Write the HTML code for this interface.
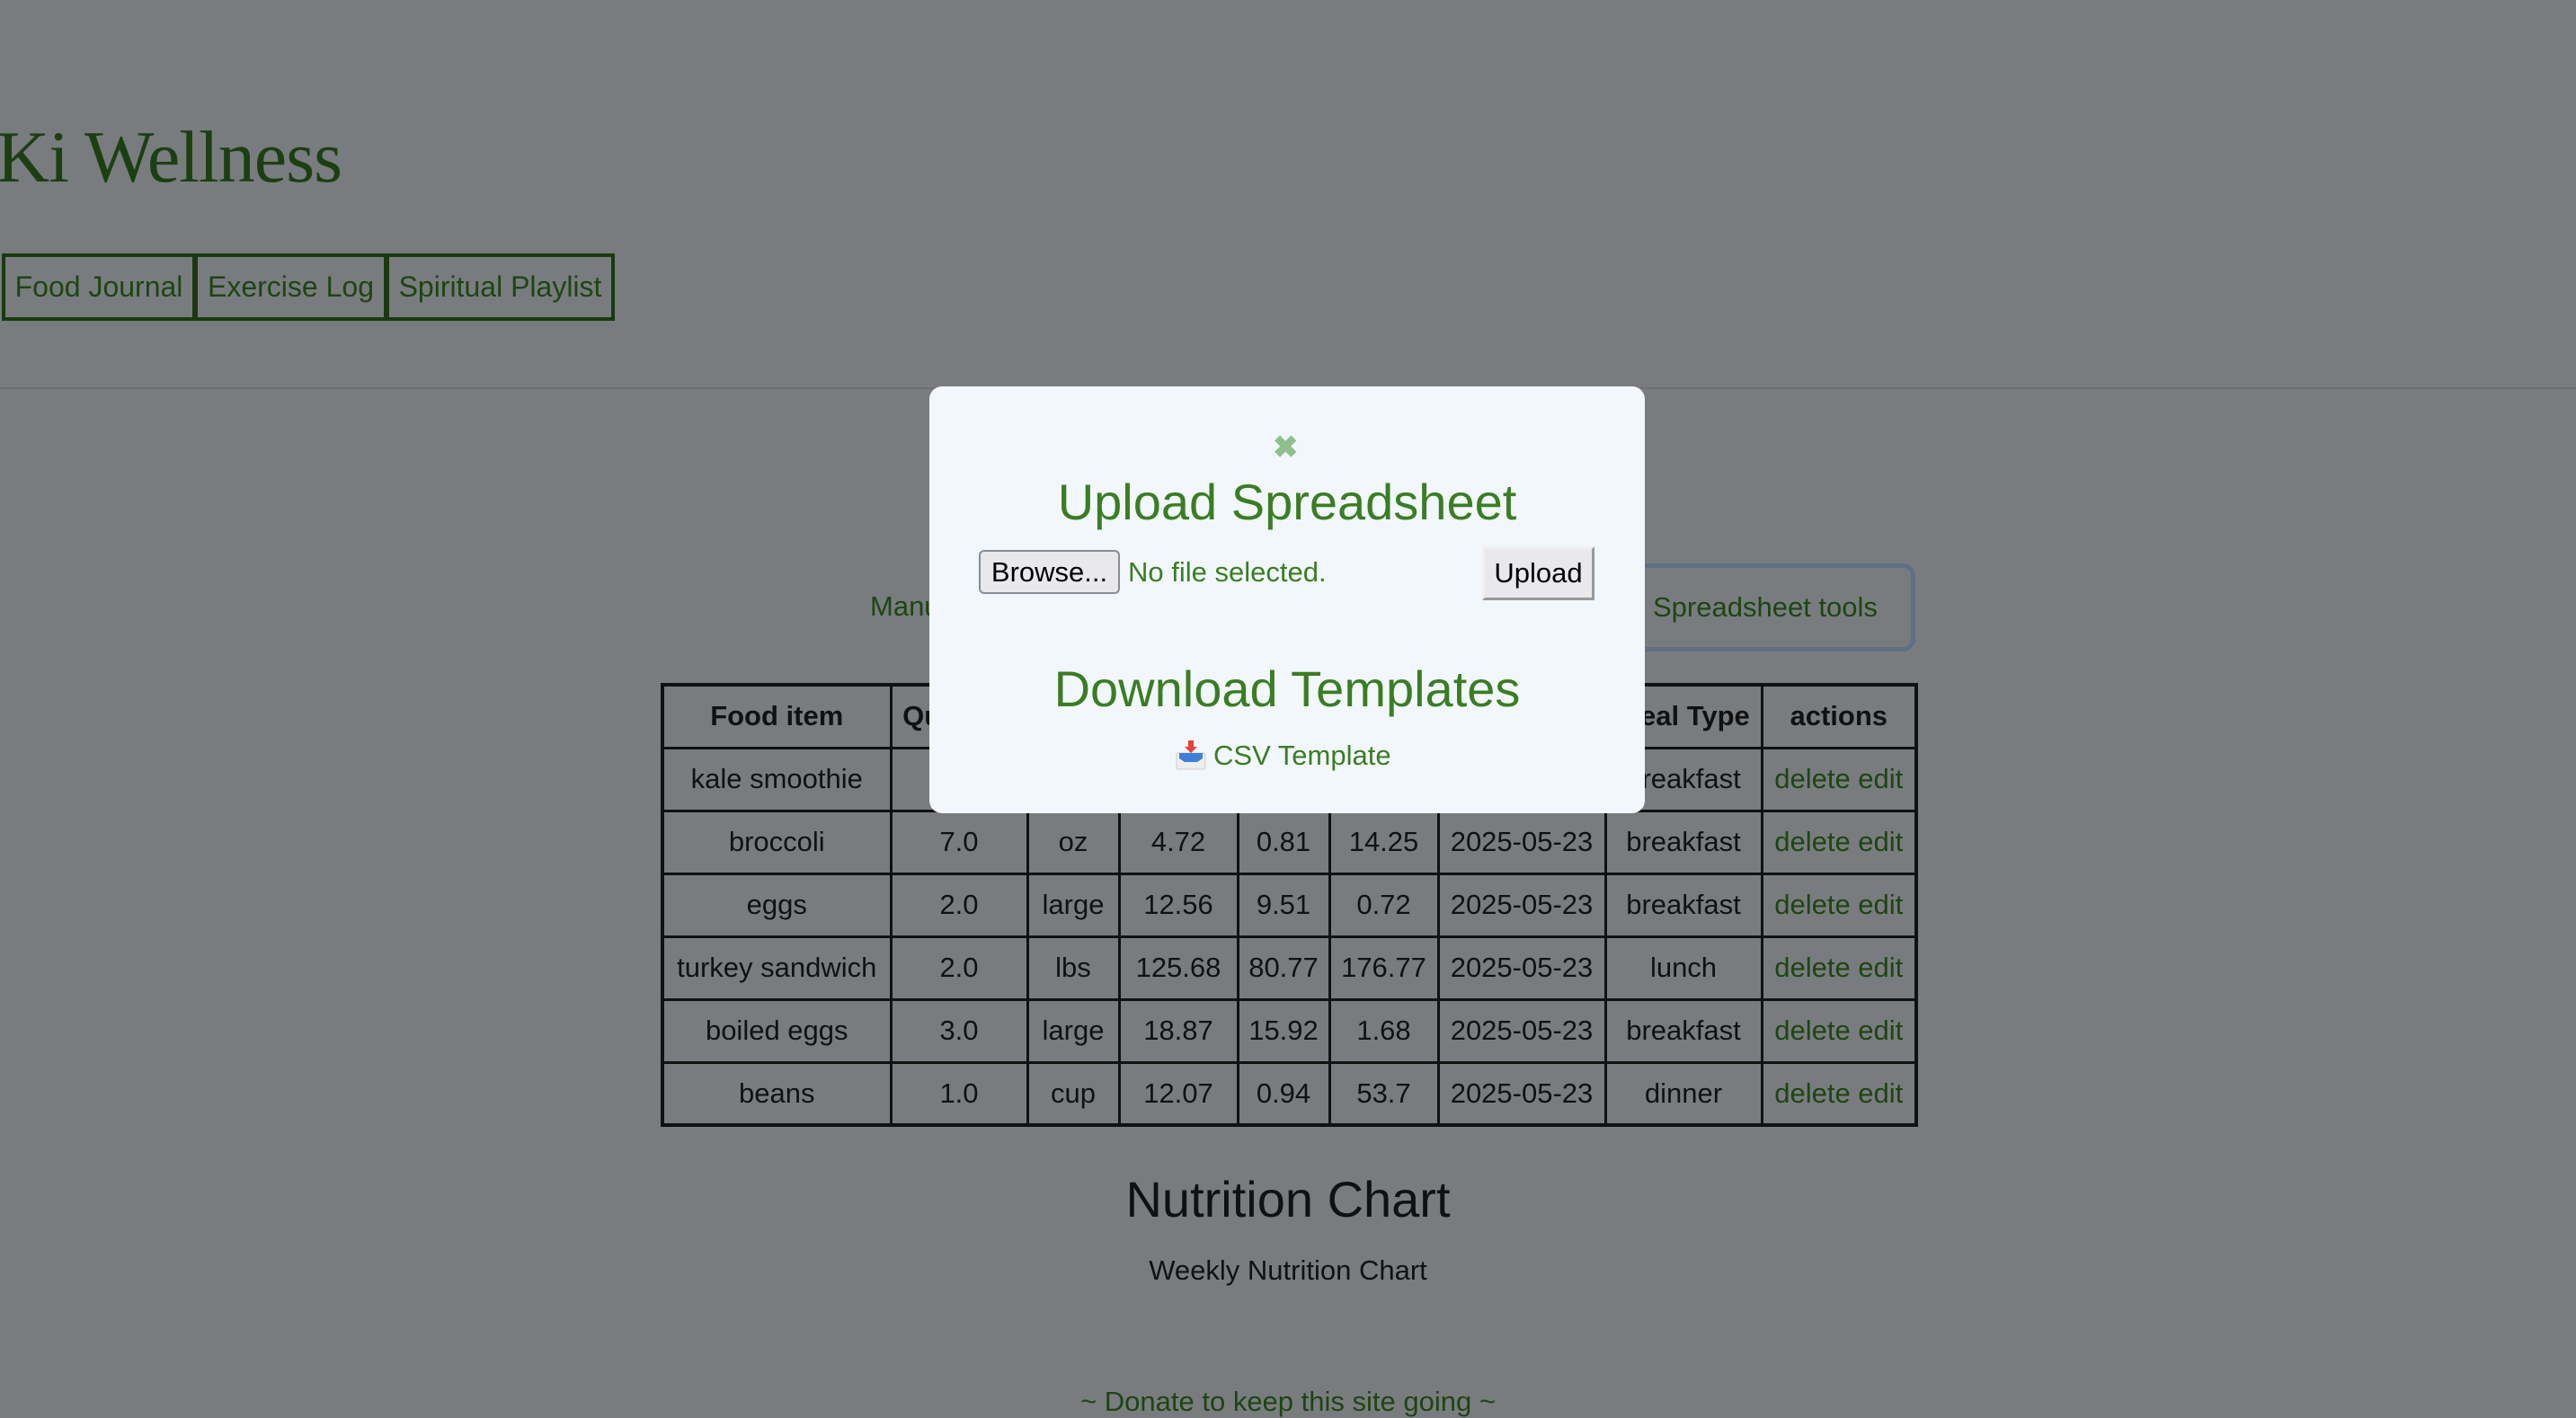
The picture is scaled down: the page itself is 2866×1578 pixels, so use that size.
<!DOCTYPE html>
<html><head><meta charset="utf-8"><style>
*{box-sizing:border-box;margin:0;padding:0}
body{width:2866px;height:1570px;overflow:hidden;background:#797c7f;font-family:"Liberation Sans",sans-serif;position:relative}
.a{position:absolute}
.title{left:-4px;top:128px;font-family:"Papyrus","Liberation Serif",serif;font-size:82px;color:#1c3f12;letter-spacing:-1px}
.nav{top:282px;height:75px;border:4px solid #193a10;color:#1d4512;font-size:32px;line-height:67px;text-align:center}
.hr{left:0;top:431px;width:2866px;height:2px;background:#6d7074}
table{position:absolute;left:735px;top:760px;width:1395px;table-layout:fixed;border-collapse:collapse;border:4px solid #111;font-size:31px;color:#111}
td,th{border:3px solid #111;text-align:center;height:70px;padding:0;white-space:nowrap;overflow:hidden}
th{font-weight:bold}
td.l{color:#1d4512}
.modal{left:1034px;top:430px;width:796px;height:475px;background:#f2f7fe;border-radius:14px}
.g{color:#3a7d22}
.btn{font-size:31px;color:#000;text-align:center;background:#e8e8ed}
</style></head><body>
<div class="a title">Ki Wellness</div>
<div class="a nav" style="left:2px;width:216px">Food Journal</div>
<div class="a nav" style="left:216px;width:215px">Exercise Log</div>
<div class="a nav" style="left:429px;width:255px">Spiritual Playlist</div>
<div class="a hr"></div>
<div class="a" style="left:968px;top:657px;font-size:31px;color:#1d4512">Manual entry</div>
<div class="a" style="left:1790px;top:627px;width:341px;height:98px;border:5px solid #5f6f85;border-radius:14px;font-size:31px;color:#1d4512;line-height:88px;padding-left:44px">Spreadsheet tools</div>
<table>
<colgroup><col style="width:254px"><col style="width:152px"><col style="width:102px"><col style="width:132px"><col style="width:102px"><col style="width:121px"><col style="width:186px"><col style="width:174px"><col style="width:172px"></colgroup>
<tr><th>Food item</th><th>Quantity</th><th>Unit</th><th>Calories</th><th>Protein</th><th>Carbs</th><th>Date</th><th>Meal Type</th><th>actions</th></tr>
<tr><td>kale smoothie</td><td>1.0</td><td>cup</td><td>10.0</td><td>1.0</td><td>5.0</td><td>2025-05-23</td><td>breakfast</td><td class="l">delete edit</td></tr>
<tr><td>broccoli</td><td>7.0</td><td>oz</td><td>4.72</td><td>0.81</td><td>14.25</td><td>2025-05-23</td><td>breakfast</td><td class="l">delete edit</td></tr>
<tr><td>eggs</td><td>2.0</td><td>large</td><td>12.56</td><td>9.51</td><td>0.72</td><td>2025-05-23</td><td>breakfast</td><td class="l">delete edit</td></tr>
<tr><td>turkey sandwich</td><td>2.0</td><td>lbs</td><td>125.68</td><td>80.77</td><td>176.77</td><td>2025-05-23</td><td>lunch</td><td class="l">delete edit</td></tr>
<tr><td>boiled eggs</td><td>3.0</td><td>large</td><td>18.87</td><td>15.92</td><td>1.68</td><td>2025-05-23</td><td>breakfast</td><td class="l">delete edit</td></tr>
<tr><td>beans</td><td>1.0</td><td>cup</td><td>12.07</td><td>0.94</td><td>53.7</td><td>2025-05-23</td><td>dinner</td><td class="l">delete edit</td></tr>
</table>
<div class="a" style="left:0;width:2866px;top:1302px;text-align:center;font-size:56px;color:#111">Nutrition Chart</div>
<div class="a" style="left:0;width:2866px;top:1396px;text-align:center;font-size:31px;color:#111">Weekly Nutrition Chart</div>
<div class="a" style="left:0;width:2866px;top:1542px;text-align:center;font-size:31px;color:#1d4512">~ Donate to keep this site going ~</div>

<div class="a modal"></div>
<div class="a" style="left:1416px;top:478px;font-size:34px;color:#8fbf8a;font-weight:bold">✖</div>
<div class="a g" style="left:1034px;width:796px;top:526px;text-align:center;font-size:56px">Upload Spreadsheet</div>
<div class="a btn" style="left:1089px;top:612px;width:157px;height:49px;border:2px solid #8c8c96;border-radius:6px;line-height:45px">Browse...</div>
<div class="a g" style="left:1255px;top:619px;font-size:31px">No file selected.</div>
<div class="a btn" style="left:1649px;top:608px;width:125px;height:60px;border:3px solid;border-color:#f0f0f0 #999 #999 #f0f0f0;line-height:54px">Upload</div>
<div class="a g" style="left:1034px;width:796px;top:734px;text-align:center;font-size:56px">Download Templates</div>
<svg class="a" style="left:1307px;top:822px" width="36" height="36" viewBox="0 0 36 36">
<rect x="2" y="16" width="32" height="18" rx="2" fill="#eeeeea" stroke="#ccc"/>
<path d="M5 16h26v6l-6 4H11l-6-4z" fill="#3f7fd8"/>
<path d="M15 2h6v7h4l-7 7-7-7h4z" fill="#e8403a"/>
</svg>
<div class="a g" style="left:1350px;top:823px;font-size:31px">CSV Template</div>
</body></html>
